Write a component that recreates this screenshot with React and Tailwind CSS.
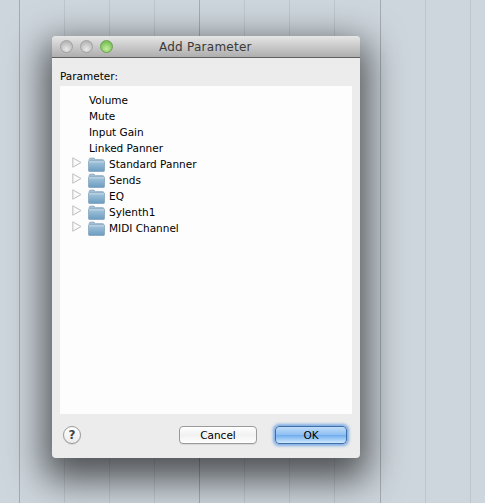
const FONT = 'font-["DejaVu_Sans",sans-serif]'

const plainRows = ['Volume', 'Mute', 'Input Gain', 'Linked Panner']
const folderRows = ['Standard Panner', 'Sends', 'EQ', 'Sylenth1', 'MIDI Channel']

// column stripes of the arrangement behind the dialog
const columns = [
  { w: 'w-[20px]', line: 'border-[#a3acb1]' },
  { w: 'w-[45px]', line: 'border-[#bec7cd]' },
  { w: 'w-[45px]', line: 'border-[#bec7cd]' },
  { w: 'w-[45px]', line: 'border-[#bec7cd]' },
  { w: 'w-[45px]', line: 'border-[#a3acb1]' },
  { w: 'w-[45px]', line: 'border-[#bec7cd]' },
  { w: 'w-[45px]', line: 'border-[#bec7cd]' },
  { w: 'w-[45px]', line: 'border-[#bec7cd]' },
  { w: 'w-[46px]', line: 'border-[#a3acb1]' },
  { w: 'w-[45px]', line: 'border-[#bec7cd]' },
  { w: 'w-[45px]', line: 'border-[#bec7cd]' },
]

function Folder({ id }) {
  return (
    <svg width="17" height="15" viewBox="0 0 17 15" className="shrink-0">
      <defs>
        <linearGradient id={id} x1="0" y1="0" x2="0" y2="1">
          <stop offset="0" stopColor="#a6c6de" />
          <stop offset="1" stopColor="#6b9cc0" />
        </linearGradient>
      </defs>
      <path d="M1 3 Q1 1 2.5 1 H6 L7.5 2.5 H14.5 Q16 2.5 16 4 V5 H1 Z" fill="#a3bfd4" stroke="#86a3ba" strokeWidth="0.6" />
      <rect x="0.5" y="4" width="16" height="10.5" rx="1" fill={`url(#${id})`} stroke="#7495ae" strokeWidth="0.6" />
      <line x1="1" y1="4.8" x2="16" y2="4.8" stroke="#d3e3ef" strokeWidth="0.8" />
    </svg>
  )
}

function Arrow() {
  return (
    <svg width="10" height="11" viewBox="0 0 10 11" className="shrink-0 -mt-[3px]">
      <path d="M0.8 0.8 L9 5.5 L0.8 10.2 Z" fill="#fafafa" stroke="#bdbdbd" strokeWidth="1" strokeLinejoin="round" />
    </svg>
  )
}

function Light({ green }) {
  return (
    <div
      className={`w-[13px] h-[13px] rounded-full border ${
        green
          ? 'border-[#6ba04f] bg-[radial-gradient(circle_at_50%_70%,#c4ee9c,#7cc25a_70%)]'
          : 'border-[#a0a0a0] bg-[radial-gradient(circle_at_50%_75%,#e8e8e8,#b8b8b8_75%)]'
      }`}
    />
  )
}

export default function App() {
  return (
    <div className={`relative w-[485px] h-[503px] overflow-hidden bg-[#ced6dd] ${FONT}`}>
      <div className="flex h-full">
        {columns.map((c, i) => (
          <div key={i} className={`${c.w} h-full border-r ${c.line}`} />
        ))}
      </div>

      <div className="absolute left-[52px] top-[36px] w-[308px] h-[422px] flex flex-col rounded-[4px] overflow-hidden bg-[#ececec] shadow-[0_14px_36px_8px_rgba(0,0,0,0.62)]">
        {/* title bar */}
        <div className="relative h-[22px] shrink-0 flex items-center gap-[7px] pl-2 bg-gradient-to-b from-[#e6e6e6] to-[#aeaeae] border-b border-[#5f5f5f]">
          <Light />
          <Light />
          <Light green />
          <span className="absolute left-[107px] top-[3px] text-[12px] leading-[16px] tracking-[0.25px] text-[#3a3a3a]">
            Add Parameter
          </span>
        </div>

        <div className="flex-1 flex flex-col px-2">
          <div className="h-[28px] pt-[12px] text-[10.5px] leading-[13px] text-black">Parameter:</div>

          {/* parameter list */}
          <div className="h-[328px] w-[292px] pt-[6px] bg-[#fdfdfe] text-[10.5px] leading-[16px] text-black">
            {plainRows.map(name => (
              <div key={name} className="h-4 pl-[29px]">{name}</div>
            ))}
            {folderRows.map((name, i) => (
              <div key={name} className="h-4 flex items-center pl-[12px]">
                <Arrow />
                <div className="ml-[6px] mr-[4px] flex"><Folder id={`folder${i}`} /></div>
                <span>{name}</span>
              </div>
            ))}
          </div>

          {/* footer */}
          <div className="flex items-start pt-[12px] text-[10.5px] text-black">
            <div className="ml-[3px] w-[18px] h-[18px] rounded-full border border-[#9a9a9a] bg-gradient-to-b from-[#ffffff] to-[#ececec] flex items-center justify-center text-[12px] font-bold leading-none text-[#444444] shadow-[0_1px_0_rgba(0,0,0,0.1)]">
              ?
            </div>
            <button className="ml-[98px] w-[78px] h-[18px] rounded-[4px] border border-[#9a9a9a] bg-gradient-to-b from-[#ffffff] via-[#f1f1f1] to-[#ffffff] leading-[16px] shadow-[0_1px_0_rgba(0,0,0,0.08)]">
              Cancel
            </button>
            <button className="ml-[18px] w-[72px] h-[18px] rounded-[4px] border border-[#3f6fa8] bg-[linear-gradient(to_bottom,#c0dcf8_0%,#8fc0f3_48%,#72aeee_52%,#cfe8fc_100%)] leading-[16px] shadow-[0_0_3px_2px_rgba(90,150,225,0.75)]">
              OK
            </button>
          </div>
        </div>
      </div>
    </div>
  )
}
